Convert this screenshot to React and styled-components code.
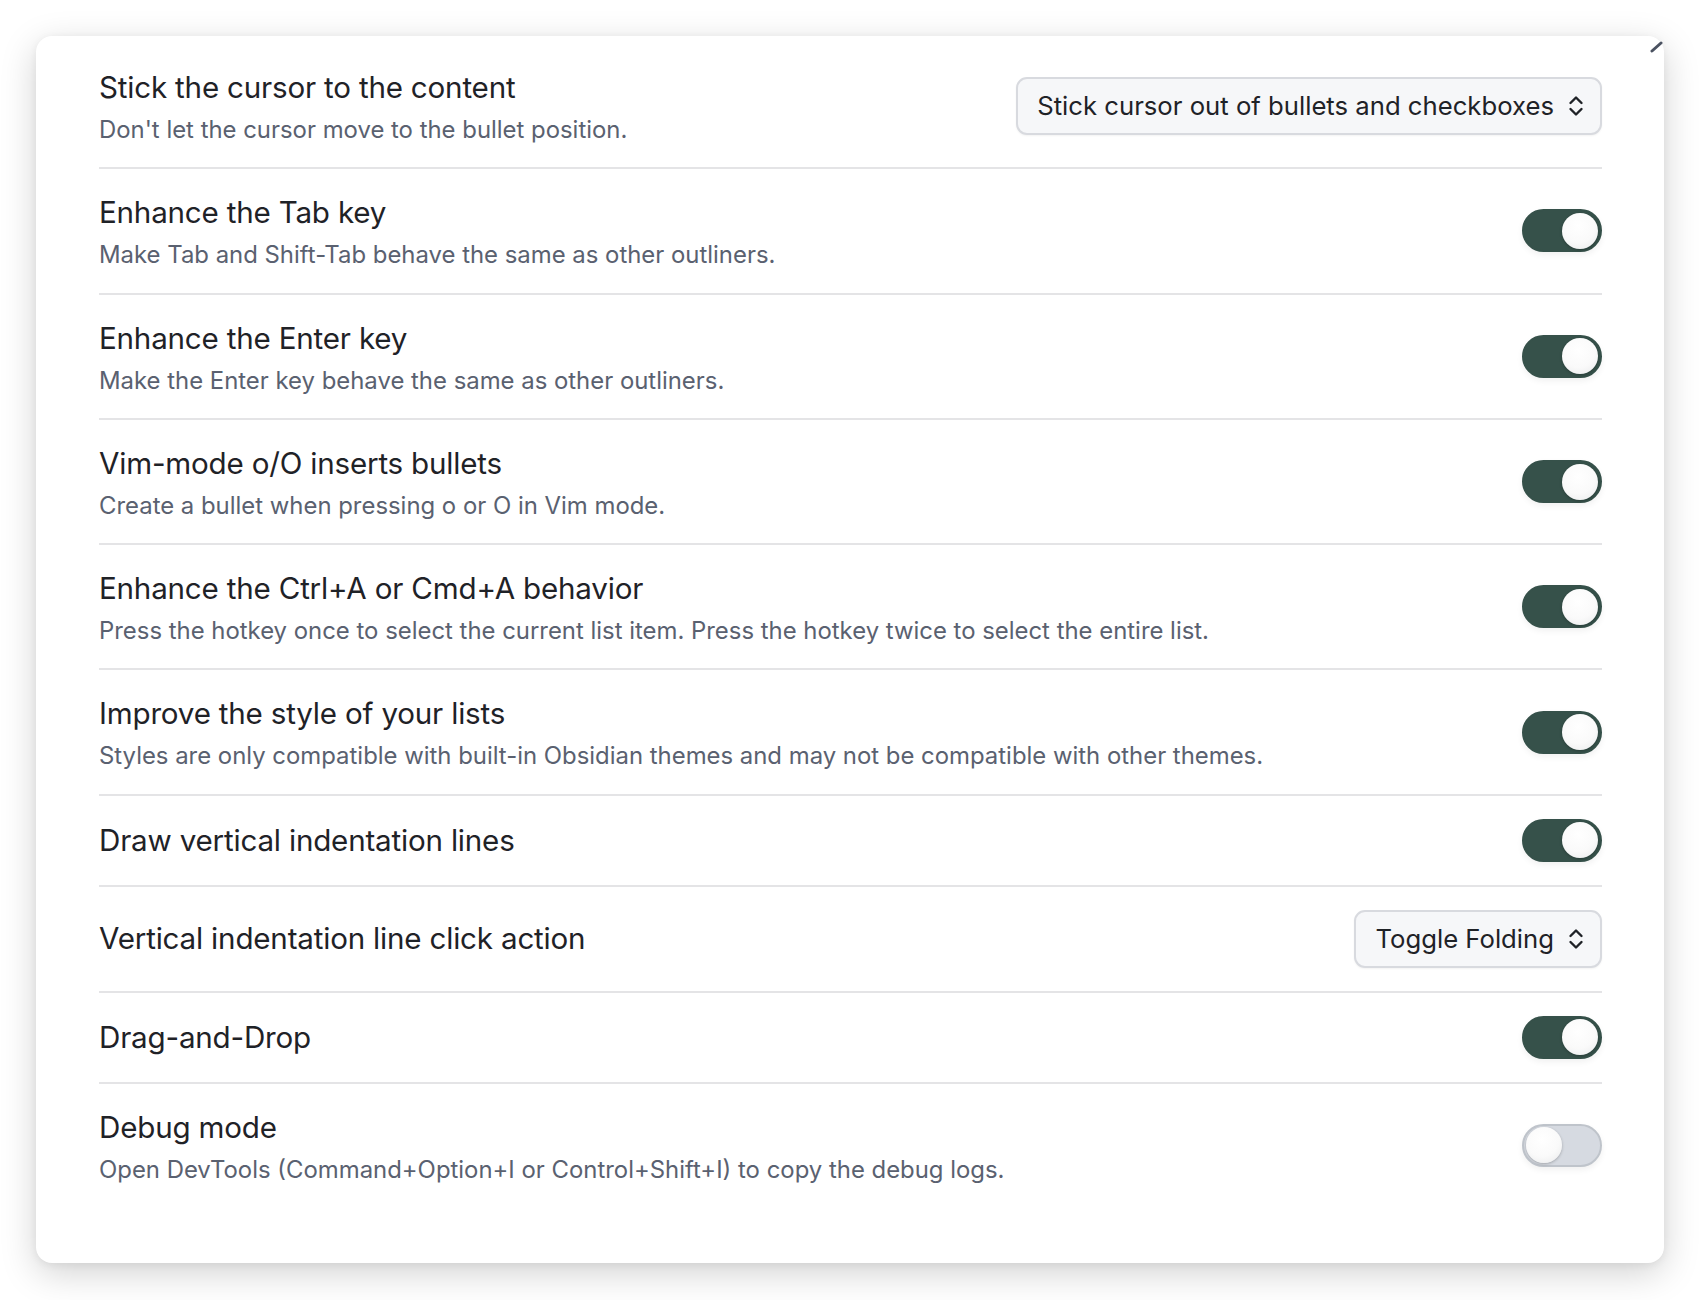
import React from "react";
import styled, { createGlobalStyle } from "styled-components";

const Global = createGlobalStyle`
  html, body { margin: 0; padding: 0; background: #ffffff; }
  body { font-family: Inter, "Noto Sans", "Liberation Sans", sans-serif; -webkit-font-smoothing: antialiased; }
`;

const Page = styled.div`
  width: 1700px;
  height: 1300px;
  box-sizing: border-box;
  padding: 36px 36px 0 36px;
  background: #ffffff;
`;

const Card = styled.div`
  position: relative;
  box-sizing: border-box;
  width: 1628px;
  height: 1227px;
  background: #ffffff;
  border-radius: 16px;
  box-shadow: 0 10px 36px rgba(0, 0, 0, 0.18), 0 2px 8px rgba(0, 0, 0, 0.06);
  padding: 8px 62px 0 63px;
`;

const Corner = styled.svg`
  position: absolute;
  top: 5px;
  right: 0px;
  width: 14px;
  height: 12px;
`;

const Row = styled.div`
  display: flex;
  align-items: center;
  gap: 24px;
  padding: 23px 0;
  border-top: ${(p) => (p.$first ? "none" : "2px solid #e4e4e6")};
`;

const Info = styled.div`
  flex: 1;
  min-width: 0;
`;

const Name = styled.div`
  font-size: 29.6px;
  line-height: 41px;
  color: #1f2227;
  letter-spacing: -0.2px;
`;

const Desc = styled.div`
  margin-top: 8px;
  font-size: 23.9px;
  line-height: 28.3px;
  color: #5a6170;
`;

const Select = styled.div`
  flex: none;
  display: flex;
  align-items: center;
  gap: 14px;
  box-sizing: border-box;
  height: 58px;
  padding: 0 16px 0 19px;
  background: #f6f7f9;
  border: 2px solid #d8dadf;
  border-radius: 11px;
  box-shadow: 0 1px 2px rgba(0, 0, 0, 0.05);
  font-size: 25.7px;
  color: #1f2227;
  white-space: nowrap;
`;

const Toggle = styled.div`
  flex: none;
  position: relative;
  box-sizing: border-box;
  width: 80px;
  height: 43px;
  border-radius: 22px;
  background: ${(p) => (p.$on ? "#36514a" : "#d6dae1")};
  border: 2px solid ${(p) => (p.$on ? "#36514a" : "#bfc4cb")};
  box-shadow: 0 3px 6px rgba(0, 0, 0, 0.06);
`;

const Knob = styled.div`
  position: absolute;
  top: 1.5px;
  left: ${(p) => (p.$on ? "38px" : "2px")};
  width: 36px;
  height: 36px;
  border-radius: 50%;
  background: radial-gradient(circle at 45% 35%, #ffffff 0%, #fafafa 55%, #e8e9ea 100%);
  box-shadow: 0 1px 3px rgba(0, 0, 0, 0.25);
`;

const Chevrons = () => (
  <svg width="16" height="24" viewBox="0 0 16 24" fill="none" stroke="#1f2227" strokeWidth="2.4" strokeLinecap="round" strokeLinejoin="round">
    <polyline points="2.5,9 8,3.5 13.5,9" />
    <polyline points="2.5,15 8,20.5 13.5,15" />
  </svg>
);

const items = [
  { name: "Stick the cursor to the content", desc: "Don't let the cursor move to the bullet position.", select: "Stick cursor out of bullets and checkboxes" },
  { name: "Enhance the Tab key", desc: "Make Tab and Shift-Tab behave the same as other outliners.", on: true },
  { name: "Enhance the Enter key", desc: "Make the Enter key behave the same as other outliners.", on: true },
  { name: "Vim-mode o/O inserts bullets", desc: "Create a bullet when pressing o or O in Vim mode.", on: true },
  { name: "Enhance the Ctrl+A or Cmd+A behavior", desc: "Press the hotkey once to select the current list item. Press the hotkey twice to select the entire list.", on: true },
  { name: "Improve the style of your lists", desc: "Styles are only compatible with built-in Obsidian themes and may not be compatible with other themes.", on: true },
  { name: "Draw vertical indentation lines", on: true },
  { name: "Vertical indentation line click action", select: "Toggle Folding" },
  { name: "Drag-and-Drop", on: true },
  { name: "Debug mode", desc: "Open DevTools (Command+Option+I or Control+Shift+I) to copy the debug logs.", on: false },
];

export default function App() {
  return (
    <>
      <Global />
      <Page>
        <Card>
          <Corner viewBox="0 0 14 12">
            <line x1="2" y1="10" x2="11" y2="2" stroke="#4b5261" strokeWidth="3" strokeLinecap="round" />
          </Corner>
          {items.map((it, i) => (
            <Row key={i} $first={i === 0}>
              <Info>
                <Name>{it.name}</Name>
                {it.desc && <Desc>{it.desc}</Desc>}
              </Info>
              {it.select ? (
                <Select>
                  <span>{it.select}</span>
                  <Chevrons />
                </Select>
              ) : (
                <Toggle $on={it.on}>
                  <Knob $on={it.on} />
                </Toggle>
              )}
            </Row>
          ))}
        </Card>
      </Page>
    </>
  );
}
